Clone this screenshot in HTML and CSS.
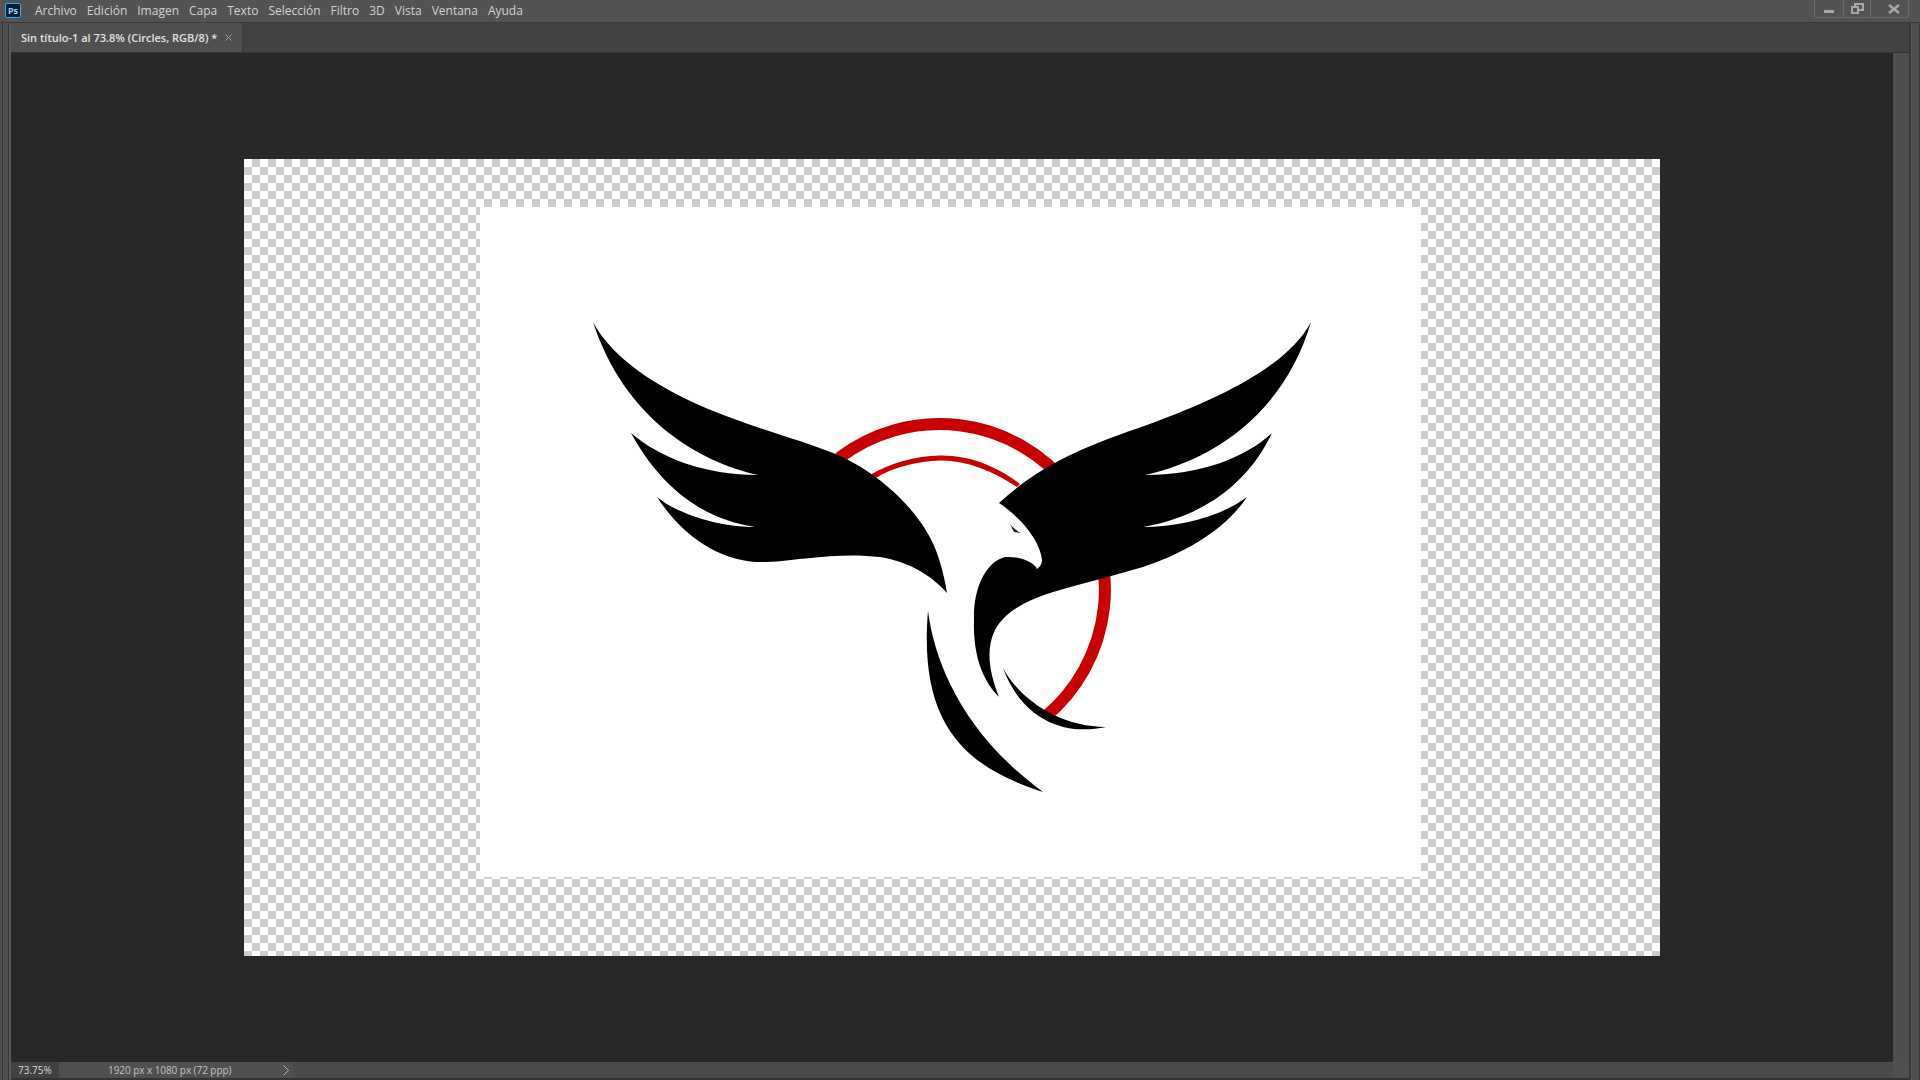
FILE: index.html
```html
<!DOCTYPE html>
<html lang="es">
<head>
<meta charset="UTF-8">
<title>Sin título-1 al 73.8% (Circles, RGB/8) *</title>
<link rel="stylesheet" href="styles.css">
</head>
<body>

<header class="menubar">
  <div class="ps-logo">Ps</div>
  <nav class="menu">
    <span>Archivo</span>
    <span>Edición</span>
    <span>Imagen</span>
    <span>Capa</span>
    <span>Texto</span>
    <span>Selección</span>
    <span>Filtro</span>
    <span>3D</span>
    <span>Vista</span>
    <span>Ventana</span>
    <span>Ayuda</span>
  </nav>
  <div class="window-buttons">
    <div class="win-btn win-min">
      <svg width="12" height="12" viewBox="0 0 12 12"><rect x="1" y="7" width="10" height="3" fill="#a8a8a8"/></svg>
    </div>
    <div class="win-btn win-restore">
      <svg width="14" height="12" viewBox="0 0 14 12" fill="none" stroke="#a8a8a8" stroke-width="2"><rect x="2" y="4" width="6" height="6"/><path d="M5 4V1h8v6H8"/></svg>
    </div>
    <div class="win-btn win-close">
      <svg width="12" height="12" viewBox="0 0 12 12" stroke="#a8a8a8" stroke-width="2.4"><path d="M1 2l10 8M11 2L1 10"/></svg>
    </div>
  </div>
</header>

<div class="workspace">
  <div class="side-strip"></div>

  <main class="document">
    <div class="tabbar">
      <div class="tab">
        <span class="tab-title">Sin título-1 al 73.8% (Circles, RGB/8) *</span>
        <svg class="tab-close" width="7" height="7" viewBox="0 0 7 7" stroke="#a0a0a0" stroke-width="1"><path d="M0.5 0.5l6 6M6.5 0.5l-6 6"/></svg>
      </div>
    </div>

    <div class="doc-body">
      <div class="viewport">
        <div class="canvas">
          <div class="sheet">
            <svg class="logo" viewBox="480 207 941 670" width="941" height="670">
              <!-- red ring goes first, the wings sit on top of it -->
              <path class="ring" d="M839 458 A165.5 165.5 0 0 1 1045 717"/>
              <path class="ring-thin" d="M870 475 C890 463 915 456 940 455.5 C970 455 998 467 1020 484 L1017 487 C993 471 966 460 940 460.5 C918 461 893 467 874 479 Z"/>

              <!-- left wing -->
              <path d="M593 322 C612 358 660 393 737 420 C775 434 806 442 833 453 C880 472 925 515 938 556 C942 568 945 580 947 593 C932 576 910 562 880 557 C840 552 800 560 767 562 C725 564 685 540 657 497 C675 512 715 527 755 527 C710 520 665 495 631 433 C660 458 705 475 758 475 C700 462 625 420 593 322 Z"/>

              <!-- right wing, head and neck -->
              <path d="M1311 322 C1290 362 1230 395 1147 425 C1085 446 1040 465 999 503 C1020 517 1040 540 1042 560 C1042 564 1040 567 1037 569 C1034 562 1020 556 1005 557 C985 562 973 590 974 620 C973 650 980 678 999 697 C990 675 985 650 995 630 C1005 612 1025 600 1060 590 C1085 583 1115 575 1143 567 C1185 553 1225 530 1247 497 C1220 517 1180 527 1143 527 C1195 518 1245 490 1272 433 C1245 458 1200 475 1145 475 C1205 462 1282 420 1311 322 Z"/>
              <path class="eye" d="M1010 524 C1013 528 1017 531 1021 533 L1014 532 Z"/>

              <!-- tail feathers -->
              <path d="M928 611 C935 665 965 735 1043 792 C970 768 918 730 928 611 Z"/>
              <path d="M1003 668 C1020 700 1060 727 1106 727 C1060 737 1020 715 1003 668 Z"/>
            </svg>
          </div>
        </div>
      </div>
      <aside class="scrollbar"></aside>
    </div>

    <footer class="statusbar">
      <div class="zoom-level">73.75%</div>
      <div class="doc-info">
        <span class="doc-size">1920 px x 1080 px (72 ppp)</span>
        <svg width="6" height="11" viewBox="0 0 6 11" fill="none" stroke="#b0b0b0" stroke-width="1"><path d="M0.5 0.5l5 5-5 5"/></svg>
      </div>
      <div class="status-corner"></div>
    </footer>
  </main>

  <div class="side-strip side-strip-right"></div>
</div>

</body>
</html>
```

FILE: styles.css
```css
html, body {
  height: 100%;
  margin: 0;
}
body {
  display: flex;
  flex-direction: column;
  background-color: #333;
  font-family: "Open Sans", "Liberation Sans", sans-serif;
  overflow: hidden;
}

.menubar {
  height: 23px;
  flex: none;
  display: flex;
  align-items: center;
  background-color: #535353;
  border-bottom: 1px solid #3a3a3a;
  box-sizing: border-box;
  padding-left: 5px;
}
.ps-logo {
  width: 14px;
  height: 13px;
  margin-bottom: 1px;
  background-color: #001e36;
  border: 1px solid #31a8ff;
  border-radius: 2px;
  color: #9fd6ff;
  font-size: 9px;
  font-weight: 700;
  line-height: 13px;
  text-align: center;
}
.menu {
  display: flex;
  gap: 10px;
  margin-left: 14px;
  margin-bottom: 1px;
  font-size: 12px;
  color: #d2d2d2;
}
.window-buttons {
  display: flex;
  align-self: flex-start;
  margin-left: auto;
  height: 17px;
  margin-right: 11px;
  border: 1px solid #696969;
  border-top: none;
  border-radius: 0 0 4px 4px;
}
.win-btn {
  display: flex;
  align-items: center;
  justify-content: center;
  border-left: 1px solid #696969;
}
.win-min {
  width: 28px;
  border-left: none;
}
.win-restore {
  width: 26px;
}
.win-close {
  width: 38px;
  box-sizing: border-box;
  padding-left: 8px;
}

.workspace {
  flex: 1;
  min-height: 0;
  display: flex;
}
.side-strip {
  width: 11px;
  flex: none;
  background: linear-gradient(to right, #4f4f4f 0 2px, #353535 2px 3px, #505050 3px 8px, #353535 8px 9px, #5a5a5a 9px 11px);
}
.side-strip-right {
  background: linear-gradient(to right, #383838 0 2px, #5a5a5a 2px 3px, #4f4f4f 3px 10px, #383838 10px 11px);
}

.document {
  flex: 1;
  min-width: 0;
  display: flex;
  flex-direction: column;
}
.tabbar {
  height: 30px;
  flex: none;
  background-color: #424242;
  border-bottom: 1px solid #333;
  box-sizing: border-box;
}
.tab {
  width: 232px;
  height: 29px;
  display: flex;
  align-items: center;
  box-sizing: border-box;
  padding-left: 10px;
  background-color: #505050;
  border-right: 1px solid #3a3a3a;
}
.tab-title {
  font-size: 11px;
  font-weight: 600;
  color: #e2e2e2;
  white-space: nowrap;
}
.tab-close {
  margin-left: 8px;
}

.doc-body {
  flex: 1;
  min-height: 0;
  display: flex;
}
.viewport {
  flex: 1;
  min-width: 0;
  display: flex;
  align-items: center;
  justify-content: center;
  background-color: #282828;
}
.canvas {
  width: 1416px;
  height: 797px;
  box-sizing: border-box;
  padding: 48px 0 0 236px;
  background: repeating-conic-gradient(#ccc 0 25%, #fff 0 50%) 0 0 / 16px 16px;
}
.sheet {
  width: 941px;
  height: 670px;
  background-color: #fff;
}
.logo {
  display: block;
  fill: #000;
}
.ring {
  fill: none;
  stroke: #c80000;
  stroke-width: 12;
}
.ring-thin {
  fill: #c80000;
}
.eye {
  fill: #00101c;
}
.scrollbar {
  width: 16px;
  flex: none;
  background-color: #4f4f4f;
}

.statusbar {
  height: 16px;
  flex: none;
  display: flex;
  margin-bottom: 2px;
  background-color: #4b4b4b;
  font-size: 10px;
  line-height: 16px;
}
.zoom-level {
  width: 48px;
  box-sizing: border-box;
  padding-left: 7px;
  background-color: #424242;
  color: #d8d8d8;
}
.doc-info {
  width: 234px;
  display: flex;
  align-items: center;
  box-sizing: border-box;
  padding-left: 49px;
  background-color: #505050;
  color: #c4c4c4;
}
.doc-size {
  width: 175px;
  letter-spacing: -0.06px;
}
.status-corner {
  width: 16px;
  margin-left: auto;
  background-color: #505050;
}
```
